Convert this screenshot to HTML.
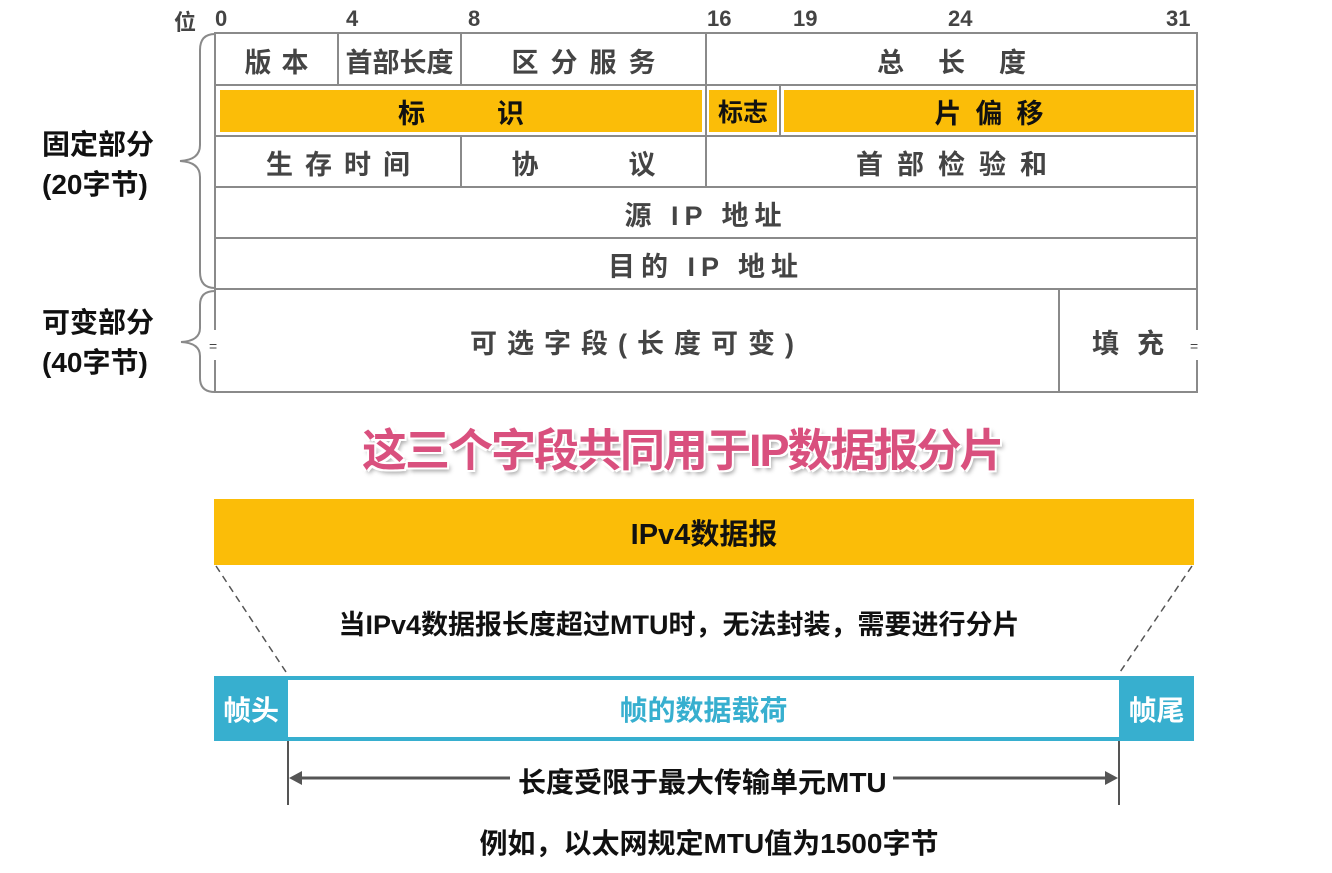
<!DOCTYPE html>
<html><head><meta charset="utf-8"><style>
body{margin:0;width:1332px;height:873px;background:#fff;position:relative;overflow:hidden;font-family:"Liberation Sans","Noto Sans CJK SC",sans-serif;font-weight:bold}
.a{position:absolute;white-space:nowrap}
.c{position:absolute;display:flex;align-items:center;justify-content:center;color:#444;font-size:27px;white-space:nowrap}
.g{color:#444}
.y{position:absolute;background:#fbbd08}
</style></head><body>
<svg class="a" style="left:0;top:0" width="1332" height="873">
<g stroke="#8a8a8a" stroke-width="2" fill="none">
<rect x="215" y="33" width="982" height="359"/>
<line x1="215" y1="85" x2="1197" y2="85"/><line x1="215" y1="136" x2="1197" y2="136"/>
<line x1="215" y1="187" x2="1197" y2="187"/><line x1="215" y1="238" x2="1197" y2="238"/><line x1="215" y1="289" x2="1197" y2="289"/>
<line x1="338" y1="33" x2="338" y2="85"/><line x1="461" y1="33" x2="461" y2="85"/><line x1="461" y1="136" x2="461" y2="187"/>
<line x1="706" y1="33" x2="706" y2="187"/><line x1="780" y1="85" x2="780" y2="136"/><line x1="1059" y1="289" x2="1059" y2="392"/>
<path d="M215 34 Q200 34 200 50 L200 145 Q200 160 180 161 Q200 162 200 177 L200 272 Q200 288 215 288"/>
<path d="M215 291 Q200 291 200 305 L200 328 Q200 341 181 342 Q200 343 200 356 L200 378 Q200 392 215 392"/>
</g>
<line x1="215" y1="330" x2="215" y2="360" stroke="#fff" stroke-width="4"/>
<line x1="1197" y1="330" x2="1197" y2="360" stroke="#fff" stroke-width="4"/>
<g stroke="#555" stroke-width="1.5" stroke-dasharray="7,5"><line x1="216" y1="566" x2="288" y2="675"/><line x1="1192" y1="566" x2="1118" y2="675"/></g>
<g stroke="#555" stroke-width="2"><line x1="288" y1="741" x2="288" y2="805"/><line x1="1119" y1="741" x2="1119" y2="805"/>
<line x1="296" y1="778" x2="510" y2="778" stroke-width="3"/><line x1="893" y1="778" x2="1110" y2="778" stroke-width="3"/></g>
<path d="M289 778 L302 771 L302 785Z M1118 778 L1105 771 L1105 785Z" fill="#555"/>
</svg>
<div class="y" style="left:220px;top:90px;width:482px;height:42px"></div>
<div class="y" style="left:709px;top:90px;width:68px;height:42px"></div>
<div class="y" style="left:784px;top:90px;width:410px;height:42px"></div>
<div class="a g" style="left:174px;top:5px;font-size:22px">位</div>
<div class="a g" style="left:215px;top:6px;font-size:22px">0</div>
<div class="a g" style="left:346px;top:6px;font-size:22px">4</div>
<div class="a g" style="left:468px;top:6px;font-size:22px">8</div>
<div class="a g" style="left:707px;top:6px;font-size:22px">16</div>
<div class="a g" style="left:793px;top:6px;font-size:22px">19</div>
<div class="a g" style="left:948px;top:6px;font-size:22px">24</div>
<div class="a g" style="left:1166px;top:6px;font-size:22px">31</div>
<div class="c" style="left:215px;top:35px;width:123px;height:50px;letter-spacing:10px;padding-left:10px;box-sizing:border-box">版本</div>
<div class="c" style="left:338px;top:35px;width:123px;height:50px">首部长度</div>
<div class="c" style="left:461px;top:35px;width:245px;height:50px;letter-spacing:12px;padding-left:12px;box-sizing:border-box">区分服务</div>
<div class="c" style="left:706px;top:35px;width:491px;height:50px;letter-spacing:34px;padding-left:34px;box-sizing:border-box">总长度</div>
<div class="c" style="left:220px;top:90px;width:482px;height:42px;color:#111;letter-spacing:72px;padding-left:72px;box-sizing:border-box">标识</div>
<div class="c" style="left:709px;top:90px;width:68px;height:42px;color:#111;font-size:25px">标志</div>
<div class="c" style="left:784px;top:90px;width:410px;height:42px;color:#111;letter-spacing:14px;padding-left:14px;box-sizing:border-box">片偏移</div>
<div class="c" style="left:215px;top:137px;width:246px;height:50px;letter-spacing:12px;padding-left:12px;box-sizing:border-box">生存时间</div>
<div class="c" style="left:461px;top:137px;width:245px;height:50px;letter-spacing:90px;padding-left:90px;box-sizing:border-box">协议</div>
<div class="c" style="left:706px;top:137px;width:491px;height:50px;letter-spacing:14px;padding-left:14px;box-sizing:border-box">首部检验和</div>
<div class="c" style="left:215px;top:188px;width:982px;height:50px;letter-spacing:6px">源 IP 地址</div>
<div class="c" style="left:215px;top:239px;width:982px;height:50px;letter-spacing:6px">目的 IP 地址</div>
<div class="c" style="left:215px;top:290px;width:844px;height:102px;letter-spacing:10px">可选字段(长度可变)</div>
<div class="c" style="left:1059px;top:290px;width:138px;height:102px;letter-spacing:18px;padding-left:18px;box-sizing:border-box">填充</div>
<div class="a g" style="left:209px;top:338px;font-size:14px;font-weight:normal">=</div>
<div class="a g" style="left:1190px;top:338px;font-size:14px;font-weight:normal">=</div>
<div class="a" style="left:42px;top:125px;font-size:28px;color:#111;line-height:40px">固定部分<br>(20字节)</div>
<div class="a" style="left:42px;top:303px;font-size:28px;color:#111;line-height:40px">可变部分<br>(40字节)</div>
<div class="a" style="left:362px;top:414px;font-size:45px;color:#d9507e;letter-spacing:-2px;text-shadow:2px 2px 0 #fff,-2px -2px 0 #fff,2px -2px 0 #fff,-2px 2px 0 #fff,3px 4px 4px #aaa">这三个字段共同用于IP数据报分片</div>
<div class="c" style="left:214px;top:499px;width:980px;height:66px;background:#fbbd08;color:#111;font-size:29px">IPv4数据报</div>
<div class="a" style="left:0;width:1358px;text-align:center;top:603px;font-size:27px;color:#111">当IPv4数据报长度超过MTU时，无法封装，需要进行分片</div>
<div class="c" style="left:214px;top:676px;width:74px;height:65px;background:#37afcf;color:#fff;font-size:28px">帧头</div>
<div class="c" style="left:1119px;top:676px;width:75px;height:65px;background:#37afcf;color:#fff;font-size:28px">帧尾</div>
<div class="c" style="left:288px;top:676px;width:831px;height:65px;border-top:4px solid #37afcf;border-bottom:4px solid #37afcf;box-sizing:border-box;color:#37afcf;font-size:28px">帧的数据载荷</div>
<div class="a" style="left:518px;top:761px;font-size:28px;color:#111">长度受限于最大传输单元MTU</div>
<div class="a" style="left:0;width:1418px;text-align:center;top:822px;font-size:28px;color:#111">例如，以太网规定MTU值为1500字节</div>
</body></html>
